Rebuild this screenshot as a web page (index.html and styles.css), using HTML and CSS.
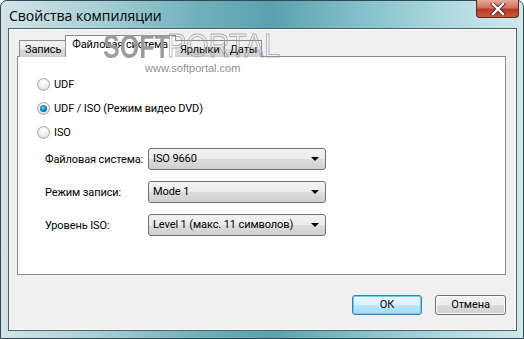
FILE: index.html
```html
<!DOCTYPE html>
<html lang="ru">
<head>
  <meta charset="UTF-8" />
  <title>Свойства компиляции</title>
  <link rel="stylesheet" href="styles.css">
</head>
<body>
  <div class="window">
    <div class="titlebar">
      <span class="title">Свойства компиляции</span>
      <span class="close-btn">
        <svg width="18" height="12" viewBox="0 0 18 12">
          <path d="M4 1 L14 11 M14 1 L4 11" stroke="#4a2020" stroke-width="4" stroke-linecap="square"/>
          <path d="M4 1 L14 11 M14 1 L4 11" stroke="#fff" stroke-width="2.4" stroke-linecap="square"/>
        </svg>
      </span>
    </div>

    <div class="client">
      <div class="tabs">
        <div class="tab">Запись</div>
        <div class="tab active">Файловая система</div>
        <div class="tab">Ярлыки</div>
        <div class="tab">Даты</div>
      </div>

      <div class="panel">
        <label class="radio"><span class="dot"></span>UDF</label>
        <label class="radio"><span class="dot checked"></span>UDF / ISO (Режим видео DVD)</label>
        <label class="radio"><span class="dot"></span>ISO</label>

        <div class="fields">
          <span class="field-label">Файловая система:</span>
          <div class="select">ISO 9660<span class="arrow"></span></div>
          <span class="field-label">Режим записи:</span>
          <div class="select">Mode 1<span class="arrow"></span></div>
          <span class="field-label">Уровень ISO:</span>
          <div class="select">Level 1 (макс. 11 символов)<span class="arrow"></span></div>
        </div>
      </div>

      <div class="buttons">
        <div class="btn default">ОК</div>
        <div class="btn">Отмена</div>
      </div>

      <!-- watermark from the screenshot -->
      <span class="wm-soft">SOFT</span>
      <span class="wm-portal">PORTAL</span>
      <span class="wm-url">www.softportal.com</span>
    </div>
  </div>
</body>
</html>
```

FILE: styles.css
```css
html, body {
  margin: 0;
  padding: 0;
}
body {
  width: 524px;
  height: 339px;
  overflow: hidden;
  font-family: Roboto, 'Noto Sans', sans-serif;
  font-size: 11px;
  letter-spacing: -0.1px;
  color: #000;
  background: #fff;
}
.window {
  box-sizing: border-box;
  width: 524px;
  height: 339px;
  border: 1px solid #2f4a52;
  border-radius: 7px 7px 0 0;
  padding: 0 6px 7px 7px;
  display: flex;
  flex-direction: column;
  background: linear-gradient(90deg, #d4e4e8 0%, #a9d0d6 18%, #6fb0bc 38%, #5aa2b0 52%, #86c2cb 70%, #b5dde3 88%, #cfe8ec 100%);
}
.titlebar {
  height: 27px;
  flex: none;
  display: flex;
  align-items: flex-start;
  position: relative;
}
.title {
  margin: 5px 0 0 1px;
  font-family: 'Open Sans', 'Noto Sans', sans-serif;
  font-size: 14px;
  letter-spacing: 0;
  color: #000;
}
.close-btn {
  position: absolute;
  right: -2px;
  top: -1px;
  width: 43px;
  height: 18px;
  box-sizing: border-box;
  border: 1px solid #5a2a26;
  border-top: none;
  border-radius: 0 0 4px 4px;
  background: linear-gradient(180deg, #e8a89a 0%, #d3705e 45%, #b83a24 55%, #c9583c 100%);
  display: flex;
  align-items: center;
  justify-content: center;
}
.client {
  flex: 1;
  position: relative;
  background: #f0f0f0;
  border: 1px solid #4f5f63;
  box-shadow: inset 0 0 0 1px #fafafa;
  padding: 7px 10px 0 8px;
  display: flex;
  flex-direction: column;
}
.tabs {
  display: flex;
  align-items: flex-end;
  height: 21px;
  padding-left: 2px;
  position: relative;
  z-index: 1;
  margin-bottom: -1px;
  white-space: nowrap;
}
.tab {
  height: 17px;
  box-sizing: border-box;
  padding: 0 4px 0 5px;
  line-height: 17px;
  border: 1px solid #898c95;
  border-bottom: none;
  border-right: none;
  background: linear-gradient(180deg, #f2f2f2 0%, #ebebeb 50%, #dcdcdc 51%, #cfcfcf 100%);
}
.tab:last-child {
  border-right: 1px solid #898c95;
}
.tab.active {
  height: 22px;
  padding: 0 7px 0 6px;
  line-height: 18px;
  background: #fff;
  border-right: 1px solid #898c95;
  margin-right: -1px;
}
.tab.active + .tab {
  border-left: none;
}
.panel {
  height: 219px;
  box-sizing: border-box;
  background: #fff;
  border: 1px solid #898c95;
  padding: 19px 0 0 19px;
}
.radio {
  display: flex;
  align-items: center;
  height: 16px;
  margin-bottom: 8px;
}
.dot {
  width: 11px;
  height: 11px;
  border-radius: 50%;
  border: 1px solid #a8a8a8;
  background: radial-gradient(circle at 50% 35%, #ffffff 0%, #f0f0f0 45%, #cfcfcf 100%);
  margin-right: 4px;
  position: relative;
}
.dot.checked::after {
  content: "";
  position: absolute;
  left: 2px;
  top: 2px;
  width: 7px;
  height: 7px;
  border-radius: 50%;
  background: radial-gradient(circle at 45% 40%, #7fd2ff 0%, #1d86c8 45%, #0b3e6e 100%);
}
.fields {
  display: grid;
  grid-template-columns: 103px 178px;
  row-gap: 11px;
  align-items: center;
  margin: 5px 0 0 8px;
  white-space: nowrap;
}
.select {
  position: relative;
  height: 22px;
  box-sizing: border-box;
  border: 1px solid #707070;
  border-radius: 3px;
  padding-left: 4px;
  line-height: 20px;
  background: linear-gradient(180deg, #f2f2f2 0%, #ebebeb 50%, #dddddd 51%, #cfcfcf 100%);
}
.arrow {
  position: absolute;
  right: 6px;
  top: 8px;
  width: 0;
  height: 0;
  border-left: 4px solid transparent;
  border-right: 4px solid transparent;
  border-top: 4px solid #000;
}
.buttons {
  display: flex;
  justify-content: flex-end;
  gap: 13px;
  margin-top: 20px;
}
.btn {
  width: 71px;
  height: 20px;
  box-sizing: border-box;
  border: 1px solid #707070;
  border-radius: 3px;
  text-align: center;
  line-height: 18px;
  background: linear-gradient(180deg, #f2f2f2 0%, #ebebeb 50%, #dddddd 51%, #cfcfcf 100%);
  box-shadow: inset 0 0 0 1px #fcfcfc;
}
.btn.default {
  width: 70px;
  border-color: #3c7fb1;
  background: linear-gradient(180deg, #eaf6fd 0%, #d9f0fc 50%, #bee6fd 51%, #a7d9f5 100%);
  box-shadow: inset 0 0 0 1px #6fcdf5;
}

/* watermark */
.wm-soft, .wm-portal, .wm-url {
  position: absolute;
  z-index: 2;
  white-space: nowrap;
  pointer-events: none;
  font-family: 'Liberation Sans', sans-serif;
  letter-spacing: 0;
  transform-origin: 0 0;
}
.wm-soft {
  left: 94px;
  top: 1px;
  font-size: 33px;
  line-height: 33px;
  font-weight: bold;
  color: transparent;
  background: radial-gradient(circle, #9a9a9a 0.7px, transparent 1px) 0 0 / 2px 2px;
  -webkit-background-clip: text;
  background-clip: text;
  transform: scaleX(0.76);
}
.wm-portal {
  left: 158px;
  top: -1px;
  font-size: 34px;
  line-height: 34px;
  color: transparent;
  -webkit-text-stroke: 1px rgba(150, 150, 150, 0.7);
  transform: scaleX(0.85);
}
.wm-url {
  left: 136px;
  top: 34px;
  font-size: 11px;
  line-height: 11px;
  color: #909090;
}
```
